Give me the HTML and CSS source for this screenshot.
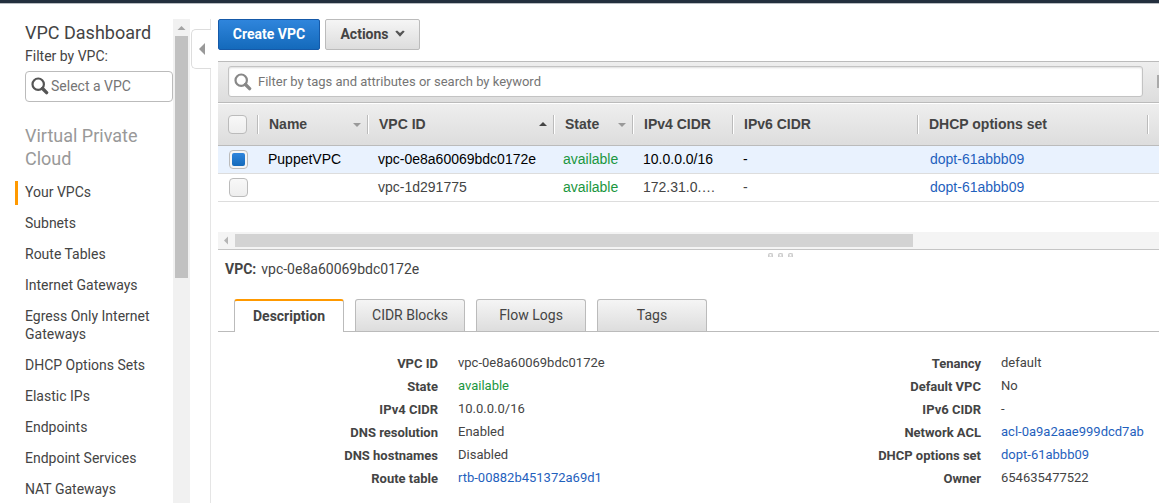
FILE: index.html
```html
<!DOCTYPE html>
<html lang="en">
<head>
<meta charset="utf-8">
<title>VPC Dashboard</title>
<link rel="stylesheet" href="styles.css">
</head>
<body>
<header class="topbar"></header>
<div class="app">
  <nav class="sidebar">
    <h1 class="side-title">VPC Dashboard</h1>
    <div class="side-label">Filter by VPC:</div>
    <div class="vpc-select">
      <svg class="search-icon" width="18" height="18" viewBox="0 0 18 18"><circle cx="7.2" cy="7.2" r="5.7" fill="none" stroke="#555" stroke-width="2.2"/><path d="M11.5 11.5L15.6 15.6" stroke="#555" stroke-width="3.4" stroke-linecap="round"/></svg>
      <span>Select a VPC</span>
    </div>
    <h2 class="side-heading">Virtual Private Cloud</h2>
    <ul class="side-list">
      <li class="active">Your VPCs</li>
      <li>Subnets</li>
      <li>Route Tables</li>
      <li>Internet Gateways</li>
      <li>Egress Only Internet Gateways</li>
      <li>DHCP Options Sets</li>
      <li>Elastic IPs</li>
      <li>Endpoints</li>
      <li>Endpoint Services</li>
      <li>NAT Gateways</li>
    </ul>
  </nav>
  <div class="side-scroll"><svg width="17" height="17" viewBox="0 0 17 17"><path d="M4.5 11L8.5 7L12.5 11Z" fill="#a3a3a3"/></svg><div class="side-thumb"></div></div>
  <div class="gutter"><div class="collapse"><svg width="6" height="12" viewBox="0 0 6 12"><path d="M6 0V12L0 6Z" fill="#999"/></svg></div></div>
  <main class="main">
    <div class="actions">
      <button class="btn primary">Create VPC</button>
      <button class="btn">Actions <svg width="10" height="8" viewBox="0 0 10 8"><path d="M0.3 1.5L2 0.4L5 3L8 0.4L9.7 1.5L5 6.8Z" fill="#555"/></svg></button>
    </div>
    <div class="toolbar">
      <div class="filter">
        <svg class="search-icon" width="18" height="18" viewBox="0 0 18 18"><circle cx="7.2" cy="7.2" r="5.7" fill="none" stroke="#888" stroke-width="2.2"/><path d="M11.5 11.5L15.6 15.6" stroke="#888" stroke-width="3.4" stroke-linecap="round"/></svg>
        <span>Filter by tags and attributes or search by keyword</span>
      </div>
      <div class="pager"></div>
    </div>
    <div class="grid head">
      <div><i class="check"></i></div>
      <div>Name<i class="sort"></i></div>
      <div>VPC ID<i class="sort up"></i></div>
      <div>State<i class="sort"></i></div>
      <div>IPv4 CIDR</div>
      <div>IPv6 CIDR</div>
      <div>DHCP options set</div>
      <div></div>
    </div>
    <div class="grid row selected">
      <div><i class="check on"><i></i></i></div>
      <div>PuppetVPC</div>
      <div>vpc-0e8a60069bdc0172e</div>
      <div class="ok">available</div>
      <div>10.0.0.0/16</div>
      <div>-</div>
      <div class="link">dopt-61abbb09</div>
    </div>
    <div class="grid row">
      <div><i class="check"></i></div>
      <div></div>
      <div>vpc-1d291775</div>
      <div class="ok">available</div>
      <div>172.31.0.…</div>
      <div>-</div>
      <div class="link">dopt-61abbb09</div>
    </div>
    <div class="hscroll"><svg width="17" height="17" viewBox="0 0 17 17"><path d="M10 4.5V12.5L6 8.5Z" fill="#b5b5b5"/></svg><div class="hthumb"></div></div>
    <div class="splitter"><i></i><i></i><i></i></div>
    <div class="detail-title"><b>VPC:</b><span>vpc-0e8a60069bdc0172e</span></div>
    <div class="tabs">
      <div class="tab current">Description</div>
      <div class="tab">CIDR Blocks</div>
      <div class="tab">Flow Logs</div>
      <div class="tab">Tags</div>
    </div>
    <div class="details">
      <dl>
        <dt>VPC ID</dt><dd>vpc-0e8a60069bdc0172e</dd>
        <dt>State</dt><dd class="ok">available</dd>
        <dt>IPv4 CIDR</dt><dd>10.0.0.0/16</dd>
        <dt>DNS resolution</dt><dd>Enabled</dd>
        <dt>DNS hostnames</dt><dd>Disabled</dd>
        <dt>Route table</dt><dd class="link">rtb-00882b451372a69d1</dd>
      </dl>
      <dl>
        <dt>Tenancy</dt><dd>default</dd>
        <dt>Default VPC</dt><dd>No</dd>
        <dt>IPv6 CIDR</dt><dd>-</dd>
        <dt>Network ACL</dt><dd class="link">acl-0a9a2aae999dcd7ab</dd>
        <dt>DHCP options set</dt><dd class="link">dopt-61abbb09</dd>
        <dt>Owner</dt><dd>654635477522</dd>
      </dl>
    </div>
  </main>
</div>
</body>
</html>
```
FILE: styles.css
```css
* { box-sizing: border-box; }
body { margin: 0; height: 503px; overflow: hidden; background: #fff; color: #444; font: 14px/18px Roboto, sans-serif; }
h1, h2, ul, dl, dd { margin: 0; padding: 0; font-weight: 400; }
svg { display: block; flex: none; }
.topbar { height: 4px; background: #232f3e; border-bottom: 1px solid #b9bdc2; }
.app { display: flex; height: 499px; padding-top: 15px; }
.sidebar { width: 173px; height: 484px; overflow: hidden; flex: none; }
.side-title { font-size: 18px; line-height: 24px; margin: 2px 0 0 25px; }
.side-label { margin: 2px 0 0 25px; line-height: 18px; }
.vpc-select { margin: 6px 0 0 25px; width: 148px; height: 31px; border: 1px solid #bbb; border-radius: 4px; display: flex; align-items: center; gap: 2px; padding: 0 0 1px 5px; color: #757575; }
.side-heading { margin: 22px 0 0 25px; width: 125px; font-size: 18px; line-height: 23px; color: #999; }
.side-list { list-style: none; margin-top: 11px; }
.side-list li { margin: 0 0 7px 15px; padding: 2px 20px 4px 7px; border-left: 3px solid transparent; line-height: 18px; }
.side-list li.active { border-left-color: #f90; }
.side-scroll { width: 17px; background: #f1f1f1; flex: none; }
.side-thumb { width: 13px; height: 242px; margin-left: 2px; background: #c1c1c1; }
.gutter { width: 21px; border-right: 1px solid #e5e5e5; padding: 10px 0 0 1px; flex: none; }
.collapse { width: 20px; height: 40px; background: #fff; border: 1px solid #ddd; border-right: 0; border-radius: 5px 0 0 5px; display: flex; align-items: center; padding-left: 7px; }
.main { flex: 1; min-width: 0; padding-left: 7px; }
.actions { display: flex; gap: 5px; }
.btn { height: 31px; width: 95px; padding: 0 0 2px; display: flex; align-items: center; justify-content: center; gap: 6px; border: 1px solid #bbb; border-radius: 2px; background: linear-gradient(#f5f5f5, #ddd); color: #444; font: 700 14px Roboto, sans-serif; }
.btn.primary { width: 102px; border-color: #1559a8; background: linear-gradient(#2f85dc, #146abb); color: #fff; }
.toolbar { margin-top: 11px; height: 42px; padding: 4px 0 5px 10px; border: solid #bbb; border-width: 1px 0; background: linear-gradient(#eee, #ddd); display: flex; }
.filter { width: 915px; height: 31px; background: #fff; border: 1px solid #c3c3c3; border-radius: 3px; box-shadow: inset 0 1px 2px #ddd; display: flex; align-items: center; gap: 6px; padding-left: 5px; color: #757575; font-size: 13px; }
.pager { width: 2px; height: 13px; margin: 9px 0 0 14px; background: #aaa; }
.grid { display: grid; grid-template-columns: 39px 110px 186px 79px 100px 185px 230px 1fr; font: 14px/27px "Liberation Sans", Arial, sans-serif; align-items: center; white-space: nowrap; }
.grid > div { padding-left: 11px; }
.head { margin-top: 1px; height: 42px; border-bottom: 1px solid #bbb; background: linear-gradient(#eee, #ddd); font-weight: 700; line-height: 19px; }
.head > div { height: 19px; border-left: 1px solid #bbb; box-shadow: inset 1px 0 #fff; display: flex; align-items: center; justify-content: space-between; padding-right: 6px; }
.head > div:first-child { border: 0; box-shadow: none; padding-left: 10px; }
.head > div:last-child { padding: 0; }
.check { display: block; flex: none; width: 19px; height: 19px; border: 1px solid #bbb; border-radius: 4px; background: linear-gradient(#f8f8f8, #eee); }
.check.on { padding: 2px; background: #f5f5f5; }
.check.on i { display: block; width: 13px; height: 13px; border-radius: 2px; background: linear-gradient(#2f85dc, #146abb); }
.sort { border: 4px solid transparent; border-top-color: #999; border-bottom: 0; }
.sort.up { border: 4px solid transparent; border-bottom-color: #444; border-top: 0; margin: 0 0 2px; }
.row { height: 28px; border-bottom: 1px solid #ddd; color: #444; }
.row > div:nth-child(4) { padding-left: 10px; }
.row > div:nth-child(7) { padding-left: 13px; }
.selected { background: #e9f2fe; color: #000; }
.grid .ok, .ok { color: #1a9640; }
.grid .link, .link { color: #1f61bd; }
.hscroll { margin-top: 30px; height: 18px; background: #f4f4f4; border-bottom: 1px solid #c5c5c5; display: flex; align-items: center; }
.hthumb { width: 678px; height: 13px; background: #d3d3d3; }
.splitter { height: 10px; padding: 3px 0 0 550px; display: flex; gap: 5px; }
.splitter i { width: 5px; height: 4px; border: 1px solid #ccc; border-width: 1px 1px 0; border-radius: 2px 2px 0 0; box-shadow: inset 1px -1px #ddd, inset -1px 0 #ddd; }
.detail-title { height: 39px; padding-left: 7px; line-height: 18px; display: flex; gap: 5px; font-size: 14px; }
.tabs { height: 33px; border-bottom: 1px solid #bbb; padding-left: 16px; display: flex; gap: 11px; }
.tab { width: 110px; height: 32px; border: 1px solid #bbb; border-bottom: 0; border-radius: 3px 3px 0 0; background: linear-gradient(#f5f5f5, #ddd); text-align: center; line-height: 31px; }
.tab.current { height: 33px; border-top: 2px solid #f90; background: #fff; font-weight: 700; }
.details { display: flex; padding-top: 19px; font-size: 13px; }
dl { width: 543px; display: grid; grid-template-columns: 220px 1fr; column-gap: 20px; grid-auto-rows: 23px; line-height: 23px; flex: none; white-space: nowrap; }
dl + dl { width: 398px; }
dt { text-align: right; font-weight: 700; padding-top: 1px; }
```
